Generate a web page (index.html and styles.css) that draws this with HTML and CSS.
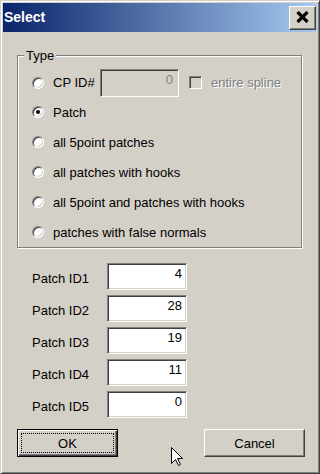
FILE: index.html
```html
<!DOCTYPE html>
<html>
<head>
<meta charset="utf-8">
<title>Select</title>
<link rel="stylesheet" href="styles.css">
</head>
<body>
<div class="window">
  <div class="titlebar">
    <span class="title">Select</span>
    <button class="close" aria-label="Close"><svg width="13" height="12" viewBox="0 0 13 12"><path d="M1.5 1 L11.5 11 M11.5 1 L1.5 11" stroke="#000" stroke-width="3.2" fill="none"/></svg></button>
  </div>
  <div class="client">
    <div class="group">
      <span class="legend">Type</span>
      <div class="opt first">
        <span class="radio"></span><span class="lbl cp">CP ID#</span>
        <span class="edit cpedit disabled">0</span>
        <span class="check"></span><span class="lbl dis">entire spline</span>
      </div>
      <div class="opt"><span class="radio on"></span><span class="lbl">Patch</span></div>
      <div class="opt"><span class="radio"></span><span class="lbl">all 5point patches</span></div>
      <div class="opt"><span class="radio"></span><span class="lbl">all patches with hooks</span></div>
      <div class="opt"><span class="radio"></span><span class="lbl">all 5point and patches with hooks</span></div>
      <div class="opt"><span class="radio"></span><span class="lbl">patches with false normals</span></div>
    </div>
    <div class="ids">
      <span class="idlbl">Patch ID1</span><span class="edit">4</span>
      <span class="idlbl">Patch ID2</span><span class="edit">28</span>
      <span class="idlbl">Patch ID3</span><span class="edit">19</span>
      <span class="idlbl">Patch ID4</span><span class="edit">11</span>
      <span class="idlbl">Patch ID5</span><span class="edit">0</span>
    </div>
    <div class="buttons">
      <button class="btn default"><span class="focus">OK</span></button>
      <button class="btn">Cancel</button>
    </div>
  </div>
  <svg class="cursor" width="13" height="20" viewBox="0 0 13 20"><path d="M0.5 0.5 V16.5 L4.5 12.5 L7.5 18.5 L9.5 17.5 L6.5 11.5 H11.5 Z" fill="#fff" stroke="#000" stroke-width="1"/></svg>
</div>
</body>
</html>
```
FILE: styles.css
```css
* { box-sizing: border-box; }
html, body { margin: 0; padding: 0; }
body {
  width: 320px;
  height: 474px;
  overflow: hidden;
  background: #d4d0c8;
  font-family: "Liberation Sans", Arial, sans-serif;
  font-size: 13px;
  line-height: 15px;
  color: #000;
}
.window {
  position: relative;
  width: 320px;
  height: 474px;
  background: #d4d0c8;
  border: 1px solid;
  border-color: #d4d0c8 #404040 #404040 #d4d0c8;
  box-shadow: inset 1px 1px 0 #fff, inset -1px -1px 0 #808080;
  padding: 2px;
}
.titlebar {
  height: 29px;
  background: linear-gradient(to right, #0a246a, #a6caf0);
  display: flex;
  align-items: center;
  justify-content: space-between;
  padding: 0 1px 0 1px;
}
.title {
  color: #fff;
  font-weight: bold;
  font-size: 14px;
  line-height: 17px;
}
.close {
  width: 27px;
  height: 24px;
  padding: 0;
  margin: 0;
  background: #d4d0c8;
  border: 1px solid;
  border-color: #fff #404040 #404040 #fff;
  box-shadow: inset -1px -1px 0 #808080;
  display: flex;
  align-items: center;
  justify-content: center;
}
.close svg { display: block; margin-top: -1px; }
.client {
  padding: 0 12px 0 14px;
  display: flex;
  flex-direction: column;
}
.group {
  margin-top: 23px;
  width: 285px;
  border: 1px solid #808080;
  box-shadow: inset 1px 1px 0 #fff, 1px 1px 0 #fff;
  display: flex;
  flex-direction: column;
}
.legend {
  align-self: flex-start;
  margin: -8px 0 5px 6px;
  padding: 0 2px;
  background: #d4d0c8;
  line-height: 15px;
}
.opt {
  display: flex;
  align-items: center;
  height: 30px;
  padding-left: 14px;
}
.opt.first { height: 29px; }
.radio {
  flex: none;
  width: 12px;
  height: 12px;
  border-radius: 50%;
  border: 1px solid;
  border-color: #808080 #fff #fff #808080;
  box-shadow: inset 1px 1px 0 #404040, inset -1px -1px 0 #d4d0c8;
  background: #fff;
  margin-right: 9px;
  display: flex;
  align-items: center;
  justify-content: center;
}
.radio.on::after {
  content: "";
  width: 4px;
  height: 4px;
  border-radius: 50%;
  background: #000;
}
.lbl { white-space: nowrap; }
.lbl.cp { width: 47px; flex: none; }
.lbl.dis { color: #808080; text-shadow: 1px 1px 0 #fff; }
.edit {
  display: block;
  width: 80px;
  height: 27px;
  background: #fff;
  border: 1px solid;
  border-color: #808080 #fff #fff #808080;
  box-shadow: inset 1px 1px 0 #404040, inset -1px -1px 0 #d4d0c8;
  text-align: right;
  padding: 2px 4px 0 0;
  line-height: 15px;
}
.edit.cpedit {
  width: 79px;
  height: 28px;
  flex: none;
  margin-right: 10px;
}
.edit.disabled {
  background: #d4d0c8;
  color: #808080;
  padding-right: 5px;
}
.check {
  flex: none;
  width: 13px;
  height: 13px;
  border: 1px solid;
  border-color: #808080 #fff #fff #808080;
  box-shadow: inset 1px 1px 0 #404040, inset -1px -1px 0 #d4d0c8;
  background: #d4d0c8;
  margin-right: 9px;
}
.ids {
  display: grid;
  grid-template-columns: 75px 80px;
  grid-auto-rows: 27px;
  row-gap: 5px;
  margin: 15px 0 0 15px;
}
.idlbl { padding-top: 8px; white-space: nowrap; }
.buttons {
  display: flex;
  justify-content: space-between;
  margin-top: 11px;
}
.btn {
  width: 101px;
  height: 28px;
  padding: 0;
  margin: 0;
  background: #d4d0c8;
  font-family: inherit;
  font-size: 13px;
  line-height: 15px;
  color: #000;
  border: 1px solid;
  border-color: #fff #404040 #404040 #fff;
  box-shadow: inset -1px -1px 0 #808080;
}
.btn.default {
  border-color: #000;
  box-shadow: inset 1px 1px 0 #fff, inset -1px -1px 0 #404040, inset -2px -2px 0 #808080;
  padding: 3px;
}
.focus {
  display: flex;
  align-items: center;
  justify-content: center;
  height: 100%;
  border: 1px dotted #000;
}
.cursor {
  position: absolute;
  left: 170px;
  top: 446px;
}
```
